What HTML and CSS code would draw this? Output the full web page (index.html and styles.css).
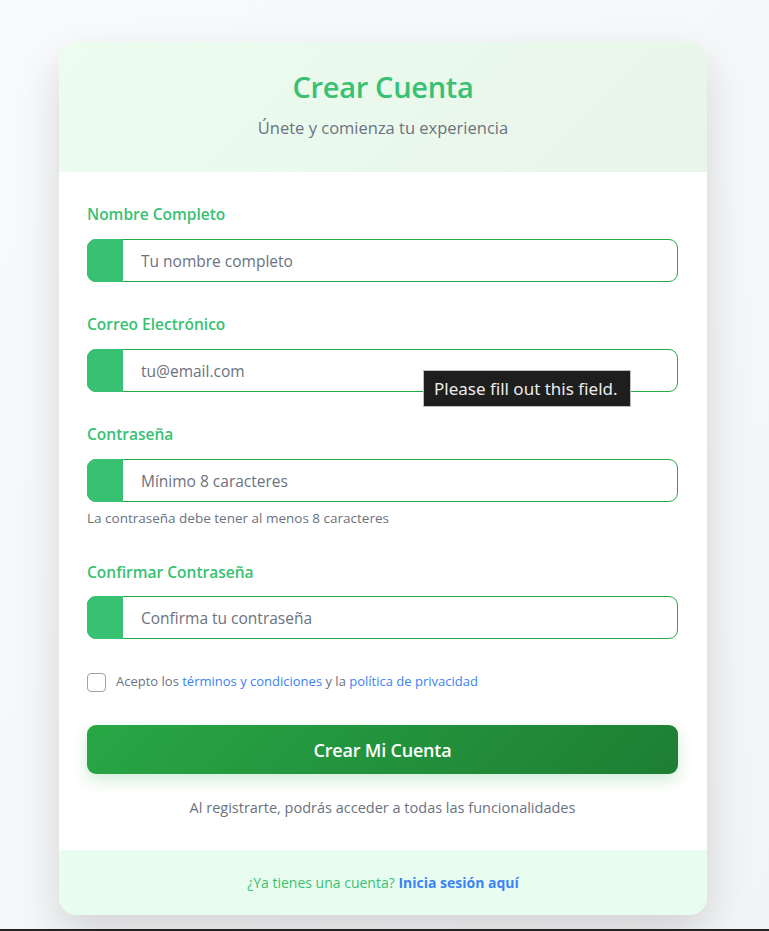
FILE: index.html
```html
<!DOCTYPE html>
<html lang="es">
<head>
<meta charset="utf-8">
<title>Crear Cuenta</title>
<link rel="stylesheet" href="styles.css">
</head>
<body>
<div class="card">
  <div class="card-header">
    <h1 class="title">Crear Cuenta</h1>
    <p class="subtitle">Únete y comienza tu experiencia</p>
  </div>
  <form class="card-body">
    <div class="group">
      <label class="label">Nombre Completo</label>
      <div class="field"><span class="field-icon"></span><input class="input" type="text" placeholder="Tu nombre completo"></div>
    </div>
    <div class="group">
      <label class="label">Correo Electrónico</label>
      <div class="field has-tip"><span class="field-icon"></span><input class="input" type="email" placeholder="tu@email.com">
        <div class="tooltip">Please fill out this field.</div>
      </div>
    </div>
    <div class="group">
      <label class="label">Contraseña</label>
      <div class="field"><span class="field-icon"></span><input class="input" type="password" placeholder="Mínimo 8 caracteres"></div>
      <p class="help">La contraseña debe tener al menos 8 caracteres</p>
    </div>
    <div class="group">
      <label class="label">Confirmar Contraseña</label>
      <div class="field"><span class="field-icon"></span><input class="input" type="password" placeholder="Confirma tu contraseña"></div>
    </div>
    <div class="terms">
      <span class="checkbox"></span>
      <span class="terms-text">Acepto los <a class="link" href="#">términos y condiciones</a> y la <a class="link" href="#">política de privacidad</a></span>
    </div>
    <button class="btn" type="button">Crear Mi Cuenta</button>
    <p class="note">Al registrarte, podrás acceder a todas las funcionalidades</p>
  </form>
  <div class="card-footer">
    <span class="footer-q">¿Ya tienes una cuenta?</span> <a class="footer-link" href="#">Inicia sesión aquí</a>
  </div>
</div>
<div class="bottom-line"></div>
</body>
</html>
```
FILE: styles.css
```css
* { box-sizing: border-box; }
html, body { margin: 0; padding: 0; }
body {
  background: linear-gradient(135deg, #f9fafb 0%, #f3f4f6 100%);
  font-family: "Open Sans", "Noto Sans", sans-serif;
  min-height: 931px;
  padding: 42px 3px 0 0;
  overflow: hidden;
}
.card {
  width: 648px;
  margin: 0 auto;
  background: #ffffff;
  border-radius: 18px;
  overflow: hidden;
  box-shadow: 0 20px 45px rgba(0, 0, 0, 0.14);
}
.card-header {
  height: 130px;
  background: linear-gradient(135deg, #ecfdf0 0%, #e8f5e9 100%);
  text-align: center;
  padding-top: 26px;
}
.title {
  margin: 0;
  font-size: 29px;
  line-height: 38px;
  font-weight: 600;
  letter-spacing: -0.3px;
  color: #38c172;
}
.subtitle {
  margin: 10px 0 0;
  font-size: 16.5px;
  line-height: 24px;
  color: #6b7280;
}
.card-body {
  padding: 30px 29px 32px 28px;
}
.group { margin-bottom: 30px; }
.label {
  display: block;
  font-size: 15.5px;
  line-height: 24px;
  font-weight: 600;
  color: #38c172;
  margin-bottom: 13px;
}
.field {
  position: relative;
  display: flex;
  height: 43px;
  border: 1px solid #28a745;
  border-radius: 9px;
}
.field-icon {
  width: 36px;
  margin: -1px 0 -1px -1px;
  background: #38c172;
  border-radius: 9px 0 0 9px;
  flex: none;
}
.input {
  flex: 1;
  border: none;
  outline: none;
  background: transparent;
  font-family: inherit;
  font-size: 15.5px;
  color: #374151;
  padding: 0 0 0 18px;
  border-radius: 0 9px 9px 0;
}
.input::placeholder { color: #6b7280; }
.tooltip {
  position: absolute;
  left: 335px;
  top: 20px;
  background: #1e1e1e;
  border: 1px solid #bdbdbd;
  color: #ececec;
  font-family: "Noto Sans", "Open Sans", sans-serif;
  font-size: 17px;
  line-height: 35px;
  padding: 0 12px 0 10px;
  white-space: nowrap;
}
.help {
  margin: 7px 0 0;
  font-size: 13.5px;
  line-height: 18px;
  color: #6b7280;
}
.group:nth-child(3) { margin-bottom: 33px; }
.group:nth-child(4) { margin-bottom: 34px; }
.group:nth-child(4) .label { margin-bottom: 12px; }
.terms {
  display: flex;
  align-items: flex-start;
  gap: 10px;
  margin-bottom: 33px;
}
.checkbox {
  width: 19px;
  height: 19px;
  border: 1px solid #9ca3af;
  border-radius: 4px;
  background: #fff;
  flex: none;
}
.terms-text {
  font-size: 13px;
  line-height: 16px;
  color: #6b7280;
}
.link { color: #3b82f6; text-decoration: none; }
.btn {
  display: block;
  width: 100%;
  height: 49px;
  border: none;
  border-radius: 9px;
  background: linear-gradient(135deg, #28a745 0%, #1e7e34 100%);
  color: #ffffff;
  font-family: inherit;
  font-size: 18px;
  font-weight: 600;
  letter-spacing: -0.2px;
  box-shadow: 0 6px 16px rgba(40, 167, 69, 0.22);
}
.note {
  margin: 24px 0 0;
  text-align: center;
  font-size: 14.5px;
  line-height: 20px;
  color: #6b7280;
}
.card-footer {
  height: 65px;
  background: #e8fdef;
  text-align: center;
  padding-top: 23px;
  font-size: 14px;
  line-height: 20px;
}
.footer-q { color: #38c172; }
.footer-link { color: #3b82f6; font-weight: 700; text-decoration: none; }
.bottom-line {
  position: fixed;
  left: 0;
  right: 0;
  bottom: 0;
  height: 2px;
  background: #232323;
}
```
